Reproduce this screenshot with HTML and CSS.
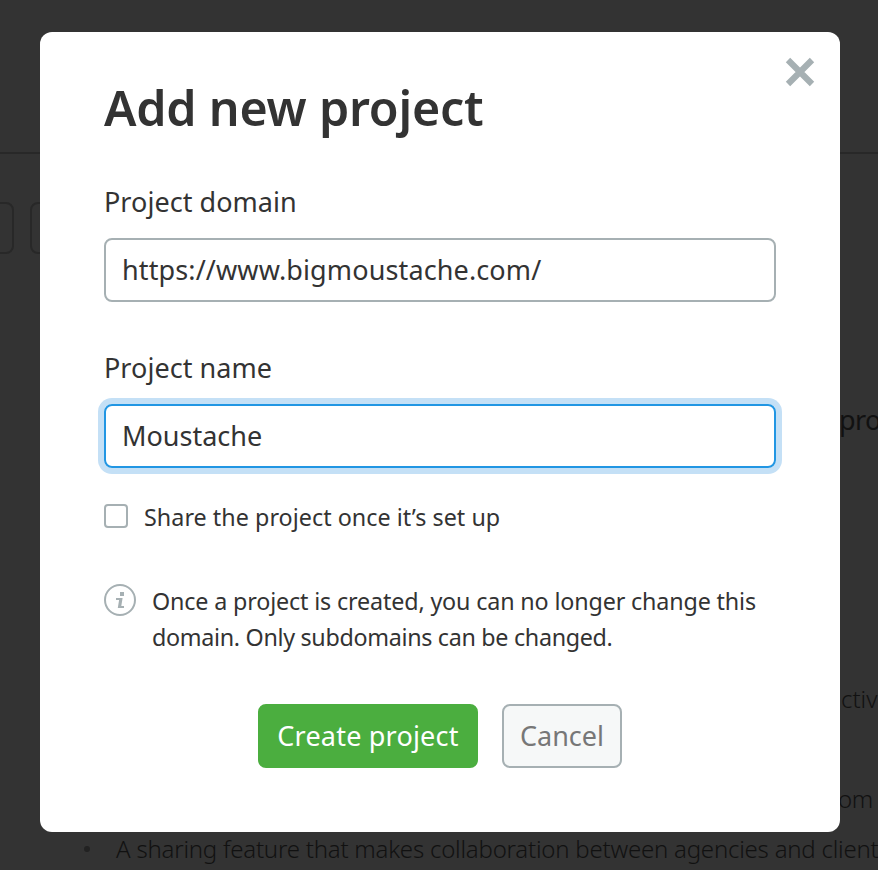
FILE: index.html
```html
<!DOCTYPE html>
<html lang="en">
<head>
<meta charset="utf-8">
<title>Add new project</title>
<link rel="stylesheet" href="styles.css">
</head>
<body>
<div class="page">
  <header class="page-header"></header>
  <div class="toolbar"><span class="tool"></span><span class="tool"></span></div>
  <p class="intro">pro</p>
  <p class="clip clip-a">ctiv</p>
  <p class="clip clip-b">om</p>
  <ul class="features"><li><span class="bg-line">A sharing feature that makes collaboration between agencies and client</span></li></ul>
</div>
<div class="overlay">
  <form class="modal" role="dialog" aria-labelledby="title">
    <button class="close" type="button" aria-label="Close">
      <svg width="30" height="30" viewBox="0 0 30 30"><path d="M3 3 27 27M27 3 3 27" stroke="#a6b0b3" stroke-width="6.2"/></svg>
    </button>
    <h1 class="title" id="title">Add new project</h1>
    <div class="field">
      <div class="label">Project domain</div>
      <div class="input"><span class="url">https://www.bigmoustache.com/</span></div>
    </div>
    <div class="field field-name">
      <div class="label">Project name</div>
      <div class="input focused">Moustache</div>
    </div>
    <div class="share"><span class="checkbox"></span><span class="share-text">Share the project once it’s set up</span></div>
    <div class="note">
      <svg class="info" width="32" height="32" viewBox="0 0 32 32"><circle cx="16" cy="16" r="15" fill="none" stroke="#a6b0b3" stroke-width="2"/><path fill="#a6b0b3" d="M16 8h4v4h-4zM12 14h6.6l-1.3 8H20v2h-6.2l1.3-8H12z"/></svg>
      <p><span class="note-first">Once a project is created, you can no longer change this</span><br><span class="note-second">domain. Only subdomains can be changed.</span></p>
    </div>
    <div class="actions">
      <button class="btn primary" type="button">Create project</button>
      <button class="btn" type="button">Cancel</button>
    </div>
  </form>
</div>
</body>
</html>
```
FILE: styles.css
```css
* { box-sizing: border-box; }
body {
  margin: 0;
  height: 870px;
  overflow: hidden;
  position: relative;
  background: #333;
  color: #333;
  font-family: "Noto Sans", "Open Sans", sans-serif;
  font-size: 27px;
}
p, ul, h1 { margin: 0; padding: 0; }
.page { height: 870px; overflow: hidden; color: #111; white-space: nowrap; }
.page-header { height: 154px; border-bottom: 2px solid #282828; }
.toolbar { display: flex; gap: 16px; margin: 48px 0 0 -86px; }
.tool { width: 100px; height: 52px; flex: none; border: 2px solid #282828; border-radius: 8px; }
.intro { margin-top: 146px; padding-left: 839px; line-height: 40px; letter-spacing: -0.6px; }
.clip { padding-left: 841px; line-height: 40px; font-size: 24px; font-weight: 300; }
.clip-a { margin-top: 239px; }
.clip-b { margin-top: 60px; padding-left: 838px; letter-spacing: -0.3px; }
.features { list-style: none; margin-top: 10px; padding-left: 84px; font-size: 24px; font-weight: 300; line-height: 40px; }
.features li { display: flex; align-items: center; gap: 26px; }
.features li::before { content: ""; flex: none; width: 6px; height: 6px; border-radius: 50%; background: #222; }
.bg-line { letter-spacing: -0.22px; }

.overlay { position: absolute; inset: 0; padding: 32px 38px 38px 40px; }
.modal { position: relative; width: 800px; height: 800px; padding: 39px 64px 64px; border-radius: 12px; background: #fff; }
.close { position: absolute; top: 25px; right: 25px; width: 30px; height: 30px; padding: 0; border: 0; background: none; }
.close svg { display: block; }
.title { font-size: 48.4px; font-weight: 600; line-height: 72px; letter-spacing: -0.22px; white-space: nowrap; }
.field { margin-top: 41px; }
.field-name { margin-top: 48px; }
.label { height: 54px; line-height: 36px; white-space: nowrap; letter-spacing: 0.04px; }
.input { height: 64px; padding-left: 16px; border: 2px solid #a6b0b3; border-radius: 8px; line-height: 60px; white-space: nowrap; }
.url { letter-spacing: 0.12px; }
.focused { border-color: #2196e3; box-shadow: 0 0 0 6px #c4e0f6; }
.share { display: flex; gap: 16px; margin-top: 31px; height: 36px; font-size: 23.3px; line-height: 36px; white-space: nowrap; }
.share-text { letter-spacing: 0.04px; }
.checkbox { width: 24px; height: 24px; margin-top: 5px; border: 2px solid #a6b0b3; border-radius: 4px; }
.note { display: flex; gap: 16px; margin-top: 48px; font-size: 23.3px; line-height: 36px; white-space: nowrap; }
.note-first { letter-spacing: -0.15px; }
.note-second { letter-spacing: -0.31px; }
.info { flex: none; margin-top: 1px; }
.actions { display: flex; justify-content: center; gap: 24px; margin-top: 49px; }
.btn { width: 120px; height: 64px; padding: 0 0 2px; border: 2px solid #a6b0b3; border-radius: 8px; background: #f6f8f8; color: #777; font: inherit; white-space: nowrap; }
.primary { width: 220px; border-color: #4bae3f; background: #4bae3f; color: #fff; letter-spacing: 0.2px; }
```
